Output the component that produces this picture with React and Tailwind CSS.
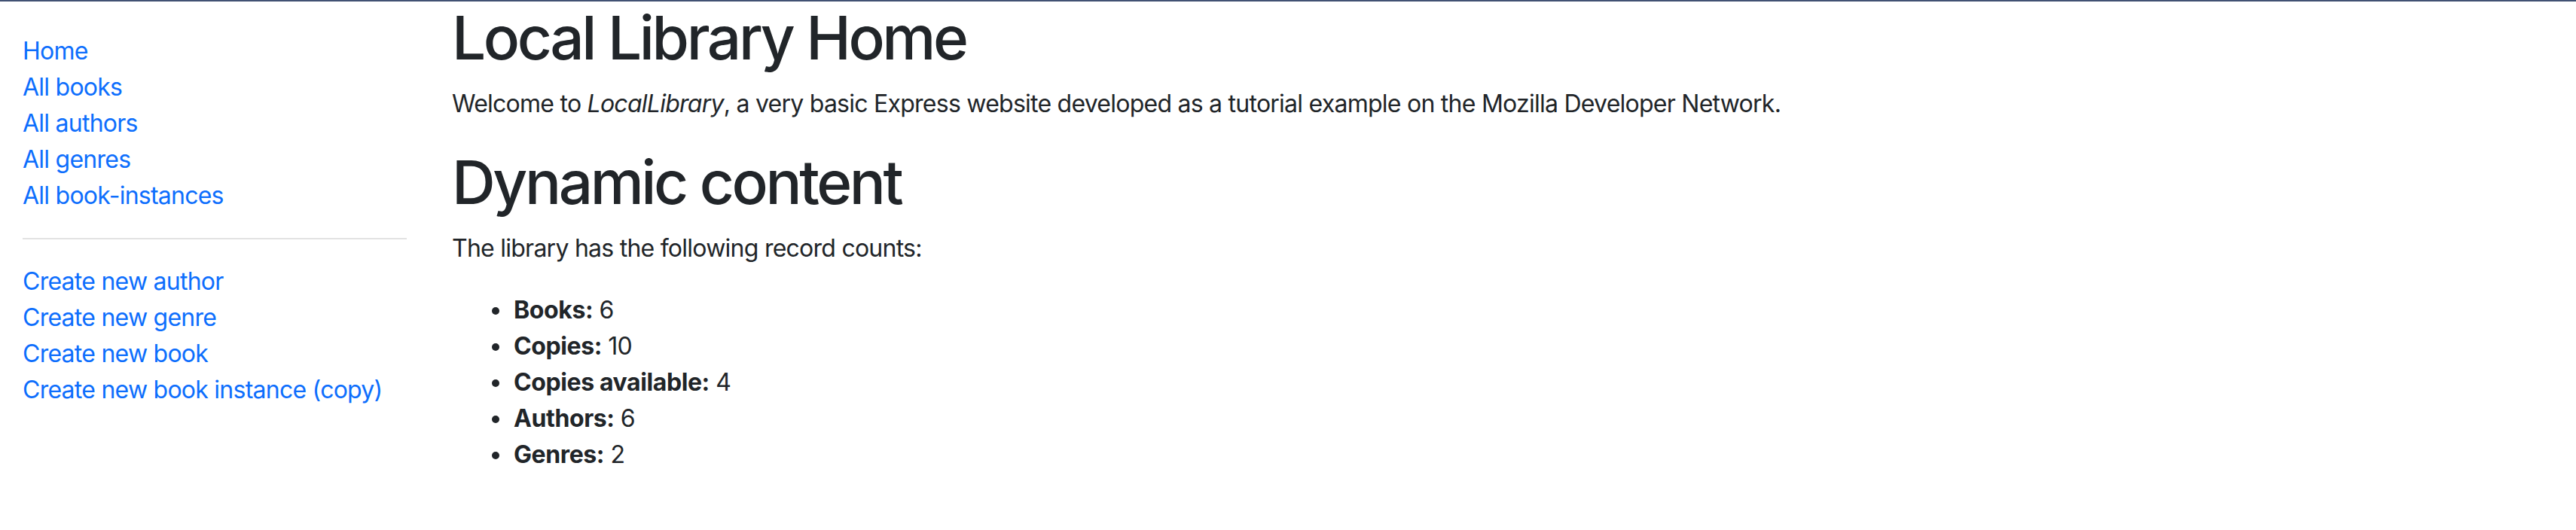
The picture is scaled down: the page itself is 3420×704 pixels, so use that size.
const sidebarLinks = ['Home', 'All books', 'All authors', 'All genres', 'All book-instances']
const createLinks = ['Create new author', 'Create new genre', 'Create new book', 'Create new book instance (copy)']

const counts = [
  ['Books:', 6],
  ['Copies:', 10],
  ['Copies available:', 4],
  ['Authors:', 6],
  ['Genres:', 2],
]

export default function App() {
  return (
    <div className="min-h-[704px] bg-white text-[#212529] font-['Inter',sans-serif] text-[32px] leading-[48px] tracking-[-0.75px]">
      <div className="h-[2px] bg-[#415173]" />
      <div className="flex">
        {/* sidebar */}
        <div className="w-[570px] shrink-0 px-[30px]">
          <ul className="mt-[42px]">
            {sidebarLinks.map((l) => (
              <li key={l}>
                <a href="#" className="text-[#0d6efd]">{l}</a>
              </li>
            ))}
            <li className="py-[32px]">
              <div className="h-[2px] bg-[#e3e3e3]" />
            </li>
            {createLinks.map((l) => (
              <li key={l}>
                <a href="#" className="text-[#0d6efd]">{l}</a>
              </li>
            ))}
          </ul>
        </div>

        {/* main */}
        <div className="flex-1 px-[30px]">
          <h1 className="text-[80px] leading-[96px] font-medium tracking-[-3.4px] mb-[16px]">Local Library Home</h1>
          <p className="mb-[32px]">
            Welcome to <em>LocalLibrary</em>, a very basic Express website developed as a tutorial example on the Mozilla Developer Network.
          </p>
          <h1 className="text-[80px] leading-[96px] font-medium tracking-[-3.4px] mb-[16px]">Dynamic content</h1>
          <p className="mb-[34px]">The library has the following record counts:</p>
          <ul className="list-disc pl-[80px]">
            {counts.map(([k, v]) => (
              <li key={k} className="pl-[2px]">
                <strong className="font-bold tracking-[-0.4px]">{k}</strong> {v}
              </li>
            ))}
          </ul>
        </div>
      </div>
    </div>
  )
}
